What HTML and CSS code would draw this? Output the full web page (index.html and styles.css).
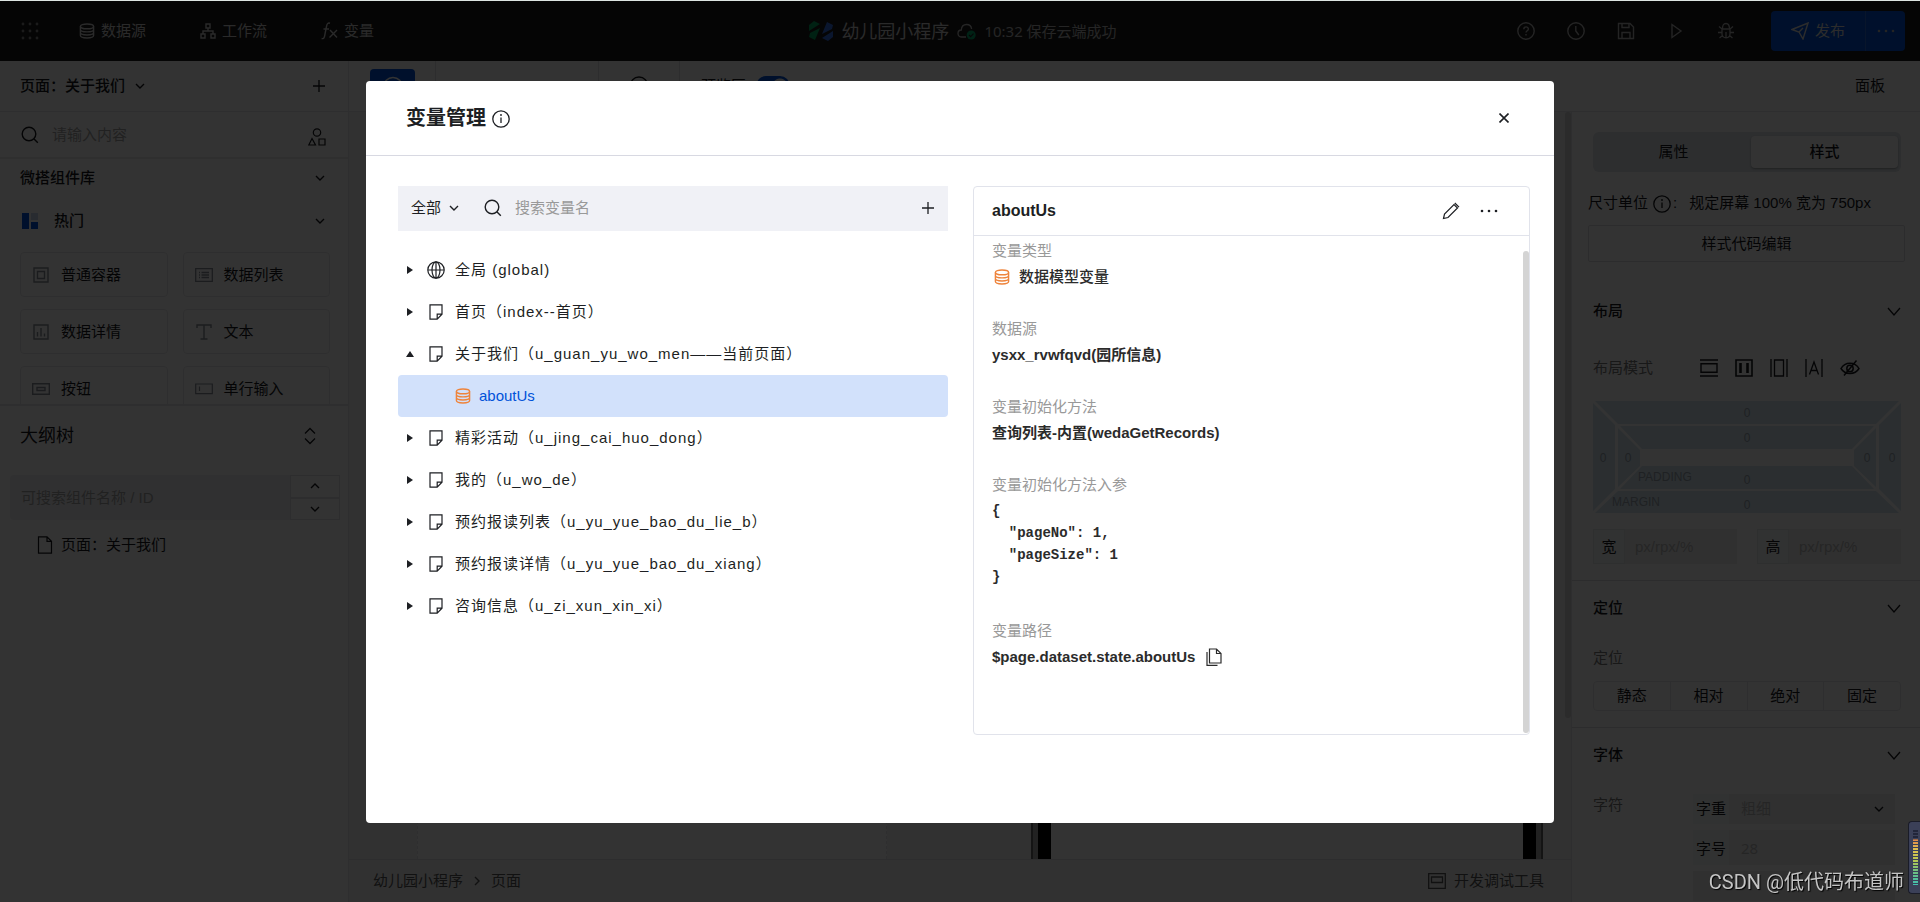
FILE: index.html
```html
<!DOCTYPE html>
<html lang="zh-CN">
<head>
<meta charset="utf-8">
<title>变量管理</title>
<link rel="stylesheet" href="styles.css">
</head>
<body>
<svg class="defs" aria-hidden="true">
  <symbol id="i-down" viewBox="0 0 10 6"><path d="M1 1l4 4 4-4" fill="none" stroke="currentColor" stroke-width="1.4"/></symbol>
  <symbol id="i-up" viewBox="0 0 10 6"><path d="M1 5l4-4 4 4" fill="none" stroke="currentColor" stroke-width="1.4"/></symbol>
  <symbol id="i-plus" viewBox="0 0 12 12"><path d="M6 0v12M0 6h12" fill="none" stroke="currentColor" stroke-width="1.3"/></symbol>
  <symbol id="i-search" viewBox="0 0 18 18"><g fill="none" stroke="currentColor" stroke-width="1.4"><circle cx="8" cy="8" r="6.8"/><path d="M12.8 12.8l4 4"/></g></symbol>
  <symbol id="i-db" viewBox="0 0 16 16"><g fill="none" stroke="currentColor" stroke-width="1.4"><ellipse cx="8" cy="3.4" rx="6.6" ry="2.4"/><path d="M1.4 3.4v9.2c0 1.3 3 2.4 6.6 2.4s6.6-1.1 6.6-2.4V3.4M1.4 6.5c0 1.3 3 2.4 6.6 2.4s6.6-1.1 6.6-2.4M1.4 9.6c0 1.3 3 2.4 6.6 2.4s6.6-1.1 6.6-2.4"/></g></symbol>
  <symbol id="i-info" viewBox="0 0 18 18"><circle cx="9" cy="9" r="8.2" fill="none" stroke="currentColor" stroke-width="1.3"/><path d="M9 7.4v5.6" fill="none" stroke="currentColor" stroke-width="1.3"/><circle cx="9" cy="5" r="0.9" fill="currentColor"/></symbol>
  <symbol id="i-page" viewBox="0 0 14 16"><path d="M1 .8h12v9.4L8.200 15.200H1zM13 10.200H8.200v5" fill="none" stroke="currentColor" stroke-width="1.200"/></symbol>
  <symbol id="i-file" viewBox="0 0 16 18"><path d="M1.500.8h8.500l4.500 4.500v11.900h-13zM10 .8v4.500h4.500" fill="none" stroke="currentColor" stroke-width="1.200"/></symbol>
  <symbol id="i-right" viewBox="0 0 8 10"><path d="M1 1l6 4-6 4z" fill="currentColor"/></symbol>
  <symbol id="i-dots" viewBox="0 0 18 4"><g fill="currentColor"><circle cx="2" cy="2" r="1.300"/><circle cx="9" cy="2" r="1.300"/><circle cx="16" cy="2" r="1.300"/></g></symbol>
  <symbol id="i-wide" viewBox="0 0 14 9"><path d="M1 1l6 7 6-7" fill="none" stroke="currentColor" stroke-width="1.300"/></symbol>
  <symbol id="i-box" viewBox="0 0 16 16"><path d="M1 1h14v14H1zM4.500 4.500h7v7h-7z" fill="none" stroke="currentColor" stroke-width="1.400"/></symbol>
</svg>

<div class="app">
  <header class="topbar">
    <nav class="topnav">
      <button class="bare" aria-label="应用"><svg width="18" height="18" viewBox="0 0 18 18" fill="currentColor" class="dim"><circle cx="2" cy="2" r="1.400"/><circle cx="9" cy="2" r="1.400"/><circle cx="16" cy="2" r="1.400"/><circle cx="2" cy="9" r="1.400"/><circle cx="9" cy="9" r="1.400"/><circle cx="16" cy="9" r="1.400"/><circle cx="2" cy="16" r="1.400"/><circle cx="9" cy="16" r="1.400"/><circle cx="16" cy="16" r="1.400"/></svg></button>
      <div class="navlinks">
        <a href="#data"><svg width="16" height="16"><use href="#i-db"/></svg>数据源</a>
        <a href="#flow"><svg width="16" height="16" viewBox="0 0 16 16" fill="none" stroke="currentColor" stroke-width="1.400"><path d="M6 1h4v4H6zM1 11h4v4H1zM11 11h4v4h-4zM8 5v3M3 11V8h10v3"/></svg>工作流</a>
        <a href="#vars"><svg width="17" height="18" viewBox="0 0 17 18" fill="none" stroke="currentColor" stroke-width="1.400"><path d="M9 1.200C6.800.6 6 2 5.600 4L3.600 14c-.4 2-1.200 3-3 2.500M2.500 7h5.500M9 8l7 7.500M16 8l-7.500 7.500"/></svg>变量</a>
      </div>
    </nav>
    <div class="apptitle">
      <svg width="24" height="20" viewBox="0 0 24 20"><path d="M0 4l5-4 6 3-11 7zM1 12l4-2 6-3-5 12-6-3z" fill="#00a35e"/><path d="M24 16l-5 4-6-3 11-7zM23 8l-4 2-6 3 5-12 6 3z" fill="#3570e6"/></svg>
      <span class="appname">幼儿园小程序</span>
      <svg class="cloud" width="19" height="17" viewBox="0 0 19 17"><path d="M9 14H5C2.500 14 1 12.400 1 10.400 1 8.400 2.400 7 4.300 7 4.500 3.600 6.700 1.500 9.600 1.500c2.700 0 4.700 1.800 5 4.500" fill="none" stroke="#bbb" stroke-width="1.300"/><circle cx="14.200" cy="12" r="4.500" fill="#00a86b"/><path d="M12 12l1.700 1.700 2.800-3" fill="none" stroke="#222" stroke-width="1.200"/></svg>
      <span class="saved">10:32 保存云端成功</span>
    </div>
    <div class="topactions">
      <button class="bare" aria-label="帮助"><svg width="18" height="18" viewBox="0 0 18 18" fill="none" stroke="currentColor" stroke-width="1.400"><circle cx="9" cy="9" r="8.200"/><path d="M6.800 7.200c0-3 4.600-3 4.600-.2 0 1.800-2.400 1.800-2.400 3.600M9 12v1.500"/></svg></button>
      <button class="bare" aria-label="历史"><svg width="18" height="18" viewBox="0 0 18 18" fill="none" stroke="currentColor" stroke-width="1.400"><circle cx="9" cy="9" r="8.200"/><path d="M8.800 4v5l3 4"/></svg></button>
      <button class="bare" aria-label="保存"><svg width="18" height="18" viewBox="0 0 18 18" fill="none" stroke="currentColor" stroke-width="1.400"><path d="M1.500 1.500h11.500l3.500 3.500v11.500h-15zM5 1.500v4h7v-4M5 16.500v-6h8v6"/></svg></button>
      <button class="bare" aria-label="预览"><svg width="18" height="18" viewBox="0 0 18 18" fill="none" stroke="currentColor" stroke-width="1.400"><path d="M5 2.500l9 6.500-9 6.500z"/></svg></button>
      <button class="bare" aria-label="调试"><svg width="18" height="18" viewBox="0 0 18 18" fill="none" stroke="currentColor" stroke-width="1.300"><path d="M5 7h8v5c0 5-8 5-8 0zM5.500 7C5.500 3 6.500 1.500 9 1.500S12.500 3 12.500 7M9 10v6M5 7L2 4.500M13 7l3-2.500M5 10.500H1M13 10.500h4M5.500 13.500L2.500 16M12.500 13.500l3 2.500"/></svg></button>
      <div class="publish">
        <button class="pub-main"><svg width="18" height="18" viewBox="0 0 18 18" fill="none" stroke="currentColor" stroke-width="1.400"><path d="M1 7.500L17 1l-5 16-4-7zM8 10l4-4"/></svg>发布</button>
        <button class="pub-more" aria-label="更多"><svg width="18" height="4"><use href="#i-dots"/></svg></button>
      </div>
    </div>
  </header>

  <div class="work">
    <aside class="left">
      <div class="pagebar">
        <button class="bare strong">页面：关于我们<svg width="10" height="6"><use href="#i-down"/></svg></button>
        <button class="bare" aria-label="新建页面"><svg width="12" height="12"><use href="#i-plus"/></svg></button>
      </div>
      <div class="compsearch">
        <svg width="18" height="18"><use href="#i-search"/></svg>
        <input type="text" placeholder="请输入内容" aria-label="搜索组件">
        <svg class="shapes" width="18" height="18" viewBox="0 0 18 18" fill="none" stroke="currentColor" stroke-width="1.200"><circle cx="9" cy="4.500" r="3.700"/><path d="M4 10.500l3.500 6.500H.8zM11 11h6v6h-6z"/></svg>
      </div>
      <section class="library">
        <h2 class="libhead">微搭组件库<svg width="10" height="6"><use href="#i-down"/></svg></h2>
        <h3 class="libhead hot"><span><svg width="16" height="16" viewBox="0 0 16 16"><path d="M0 0h7v16H0z" fill="#0052d9"/><path d="M9 0h7v7H9z" fill="#c9d4ee"/><path d="M9 9h7v7H9z" fill="#0052d9"/></svg>热门</span><svg width="10" height="6"><use href="#i-down"/></svg></h3>
        <ul class="comps">
          <li><svg width="16" height="16"><use href="#i-box"/></svg>普通容器</li>
          <li><svg width="18" height="14" viewBox="0 0 18 14" fill="none" stroke="currentColor" stroke-width="1.300"><path d="M.7.7h16.600v12.600H.7zM4 4.500h1M6.500 4.500H14M4 7h1M6.500 7H14M4 9.500h1M6.500 9.500H14"/></svg>数据列表</li>
          <li><svg width="16" height="16" viewBox="0 0 16 16" fill="none" stroke="currentColor" stroke-width="1.400"><path d="M1 1h14v14H1zM4.500 12.500V8M8 12.500V4M11.500 12.500v-3"/></svg>数据详情</li>
          <li><svg width="18" height="16" viewBox="0 0 18 16" fill="none" stroke="currentColor" stroke-width="1.400"><path d="M2 4V1h14v3M9 1v14M5.500 15h7"/></svg>文本</li>
          <li><svg width="18" height="12" viewBox="0 0 18 12" fill="none" stroke="currentColor" stroke-width="1.400"><path d="M.7.7h16.600v10.600H.7zM5 4.500h8v3H5z"/></svg>按钮</li>
          <li><svg width="18" height="12" viewBox="0 0 18 12" fill="none" stroke="currentColor" stroke-width="1.200"><path d="M.7 1h16.600v9.600H.7zM4.500 3.500V8"/></svg>单行输入</li>
        </ul>
      </section>
      <section class="outline">
        <h2>大纲树<svg width="12" height="18" viewBox="0 0 12 18" fill="none" stroke="currentColor" stroke-width="1.300"><path d="M1 6.500l5-5 5 5M1 11.500l5 5 5-5"/></svg></h2>
        <div class="treesearch">
          <input type="text" placeholder="可搜索组件名称 / ID" aria-label="搜索大纲树">
          <div class="steps">
            <button aria-label="上一个"><svg width="10" height="6"><use href="#i-up"/></svg></button>
            <button aria-label="下一个"><svg width="10" height="6"><use href="#i-down"/></svg></button>
          </div>
        </div>
        <div class="treepage"><svg width="16" height="18"><use href="#i-file"/></svg>页面：关于我们</div>
      </section>
    </aside>

    <main class="main">
      <div class="toolbar">
        <button class="tool-on" aria-label="编辑模式"><svg width="22" height="22" viewBox="0 0 22 22" fill="none" stroke="#fff" stroke-width="1.500"><circle cx="11" cy="11" r="9.500"/><path d="M16 6l-7 3-2 6 6-2z"/></svg></button>
        <span class="cell device">iPhone 6-100%</span>
        <span class="cell round"><svg width="20" height="20" viewBox="0 0 20 20" fill="none" stroke="currentColor" stroke-width="1.400"><circle cx="10" cy="10" r="9"/></svg></span>
        <label class="cell preview">预览区<input type="checkbox" class="switch" checked></label>
        <button class="bare panelbtn">面板</button>
      </div>
      <div class="stage">
        <div class="middle">
          <div class="canvas">
            <div class="artboard"></div>
            <div class="phone"><div class="screen"></div></div>
            <div class="canvasbar"></div>
          </div>
          <footer class="status">
            <nav class="crumbs"><a href="#app">幼儿园小程序</a><svg width="6" height="10" viewBox="0 0 6 10"><path d="M1 1l4 4-4 4" fill="none" stroke="currentColor" stroke-width="1.400"/></svg><a href="#page">页面</a></nav>
            <button class="bare dev"><svg width="18" height="16" viewBox="0 0 18 16" fill="none" stroke="currentColor" stroke-width="1.300"><path d="M.7.7h16.600v14.600H.7zM3.500 4h11v5.500h-11z"/></svg>开发调试工具</button>
          </footer>
        </div>
        <aside class="right">
          <div class="tabs"><button>属性</button><button class="on">样式</button></div>
          <div class="unit"><span>尺寸单位</span><svg width="18" height="18"><use href="#i-info"/></svg><span>:</span><span class="rule">规定屏幕 100% 宽为 750px</span></div>
          <button class="codebtn">样式代码编辑</button>
          <section class="sect first">
            <h2>布局<svg width="14" height="9"><use href="#i-wide"/></svg></h2>
            <div class="modes">
              <span class="lbl">布局模式</span>
              <div class="modeicons">
                <svg width="18" height="18" viewBox="0 0 18 18" fill="none" stroke="currentColor" stroke-width="1.400"><path d="M0 1h18M0 17h18M1 4.700h16v8.600H1z"/></svg>
                <svg width="18" height="18" viewBox="0 0 18 18" fill="none" stroke="currentColor" stroke-width="1.600"><path d="M1 1h16v16H1z"/><path d="M5.500 4v10M12.500 4v10" stroke-width="2.600"/></svg>
                <svg width="18" height="18" viewBox="0 0 18 18" fill="none" stroke="currentColor" stroke-width="1.300"><path d="M1 0v18M17 0v18M4.500 1h9v16h-9z"/></svg>
                <svg width="18" height="18" viewBox="0 0 18 18" fill="none" stroke="currentColor" stroke-width="1.300"><path d="M1 0v18M17 0v18M4.500 15.500L9 3l4.500 12.500M6 11.500h6"/></svg>
                <svg width="20" height="18" viewBox="0 0 20 18" fill="none" stroke="currentColor" stroke-width="1.500"><path d="M1 9.500C5 2.500 15 2.500 19 9.500 15 16 5 16 1 9.500zM16.500 1.500L4 16.500"/><circle cx="10" cy="9.500" r="3.200"/></svg>
              </div>
            </div>
            <svg class="boxmodel" viewBox="0 0 308 112">
              <g fill="#d4e6f0"><path d="M2 0h304l-23 23H25zM0 2l22 22v64L0 110zM308 2l-22 22v64l22 22zM2 112h304l-23-22H25z"/><path d="M27 25h254l-22 23H49zM25 27l22 22v16L25 86zM283 27l-22 22v16l22 21zM27 88h254l-22-23H49z"/></g>
              <g class="bmtext" text-anchor="middle"><text x="154" y="16">0</text><text x="154" y="41">0</text><text x="154" y="83">0</text><text x="154" y="108">0</text><text x="10" y="61">0</text><text x="35" y="61">0</text><text x="274" y="61">0</text><text x="299" y="61">0</text></g>
              <g class="bmname"><text x="45" y="80">PADDING</text><text x="19" y="105">MARGIN</text></g>
            </svg>
            <div class="sizes">
              <label><span>宽</span><input type="text" placeholder="px/rpx/%"></label>
              <label><span>高</span><input type="text" placeholder="px/rpx/%"></label>
            </div>
          </section>
          <section class="sect">
            <h2>定位<svg width="14" height="9"><use href="#i-wide"/></svg></h2>
            <div class="lbl">定位</div>
            <div class="segs"><button>静态</button><button>相对</button><button>绝对</button><button>固定</button></div>
          </section>
          <section class="sect">
            <h2>字体<svg width="14" height="9"><use href="#i-wide"/></svg></h2>
            <div class="fontrow">
              <span class="lbl">字符</span>
              <div class="fontfields">
                <label class="ff"><span>字重</span><select><option>粗细</option></select><svg width="10" height="6"><use href="#i-down"/></svg></label>
                <label class="ff tall"><span>字号</span><input type="text" placeholder="28"></label>
                <div class="ff"></div>
              </div>
            </div>
          </section>
        </aside>
      </div>
    </main>
  </div>
</div>

<div class="overlay">
  <div class="modal" role="dialog" aria-labelledby="dlg-title">
    <div class="mhead">
      <h1 id="dlg-title">变量管理<svg width="18" height="18"><use href="#i-info"/></svg></h1>
      <button class="bare" aria-label="关闭"><svg width="10" height="10" viewBox="0 0 10 10"><path d="M.5.5l9 9M9.500.5l-9 9" fill="none" stroke="currentColor" stroke-width="1.600"/></svg></button>
    </div>
    <div class="mbody">
      <div class="vars">
        <div class="varbar">
          <span class="scope"><select aria-label="范围"><option>全部</option></select><svg width="10" height="6"><use href="#i-down"/></svg></span>
          <svg width="18" height="18"><use href="#i-search"/></svg>
          <input type="text" placeholder="搜索变量名" aria-label="搜索变量名">
          <button class="bare" aria-label="新建变量"><svg width="12" height="12"><use href="#i-plus"/></svg></button>
        </div>
        <ul class="tree">
          <li><svg class="arrow" width="8" height="10"><use href="#i-right"/></svg><svg class="ico" width="18" height="18" viewBox="0 0 18 18" fill="none" stroke="currentColor" stroke-width="1.200"><circle cx="9" cy="9" r="8.200"/><ellipse cx="9" cy="9" rx="4" ry="8.200"/><path d="M1 9h16M9 1v16"/></svg>全局 (global)</li>
          <li><svg class="arrow" width="8" height="10"><use href="#i-right"/></svg><svg class="ico" width="14" height="16"><use href="#i-page"/></svg>首页（index--首页）</li>
          <li><svg class="arrow" width="8" height="10" viewBox="0 0 8 10"><path d="M0 8l4-6 4 6z" fill="currentColor"/></svg><svg class="ico" width="14" height="16"><use href="#i-page"/></svg>关于我们（u_guan_yu_wo_men——当前页面）</li>
          <li class="sel"><svg width="16" height="16"><use href="#i-db"/></svg>aboutUs</li>
          <li><svg class="arrow" width="8" height="10"><use href="#i-right"/></svg><svg class="ico" width="14" height="16"><use href="#i-page"/></svg>精彩活动（u_jing_cai_huo_dong）</li>
          <li><svg class="arrow" width="8" height="10"><use href="#i-right"/></svg><svg class="ico" width="14" height="16"><use href="#i-page"/></svg>我的（u_wo_de）</li>
          <li><svg class="arrow" width="8" height="10"><use href="#i-right"/></svg><svg class="ico" width="14" height="16"><use href="#i-page"/></svg>预约报读列表（u_yu_yue_bao_du_lie_b）</li>
          <li><svg class="arrow" width="8" height="10"><use href="#i-right"/></svg><svg class="ico" width="14" height="16"><use href="#i-page"/></svg>预约报读详情（u_yu_yue_bao_du_xiang）</li>
          <li><svg class="arrow" width="8" height="10"><use href="#i-right"/></svg><svg class="ico" width="14" height="16"><use href="#i-page"/></svg>咨询信息（u_zi_xun_xin_xi）</li>
        </ul>
      </div>
      <section class="detail">
        <div class="dhead">
          <h2>aboutUs</h2>
          <div class="dacts">
            <button class="bare" aria-label="编辑"><svg width="18" height="18" viewBox="0 0 18 18" fill="none" stroke="currentColor" stroke-width="1.200"><path d="M1.500 16.500l1-4.500L12 2.500l3.500 3.500L6 15.500zM12.800 1l4.200 4.200"/></svg></button>
            <button class="bare" aria-label="更多"><svg width="18" height="4"><use href="#i-dots"/></svg></button>
          </div>
        </div>
        <dl class="fields">
          <div><dt>变量类型</dt><dd class="type"><svg width="16" height="16"><use href="#i-db"/></svg>数据模型变量</dd></div>
          <div><dt>数据源</dt><dd>ysxx_rvwfqvd(园所信息)</dd></div>
          <div><dt>变量初始化方法</dt><dd>查询列表-内置(wedaGetRecords)</dd></div>
          <div class="args"><dt>变量初始化方法入参</dt><dd><pre>{
  "pageNo": 1,
  "pageSize": 1
}</pre></dd></div>
          <div><dt>变量路径</dt><dd class="path">$page.dataset.state.aboutUs<button class="bare" aria-label="复制"><svg width="16" height="18" viewBox="0 0 16 18" fill="none" stroke="currentColor" stroke-width="1.200"><path d="M3.500 1h7l4.500 4.500v9.500h-11.500zM10.500 1v4.500H15M1 4v13.300h10.500"/></svg></button></dd></div>
        </dl>
        <div class="dbar"></div>
      </section>
    </div>
  </div>
</div>

<div class="watermark">CSDN @低代码布道师</div>
<div class="meter"><div class="bars"></div></div>
</body>
</html>
```

FILE: styles.css
```css
* { box-sizing: border-box; }

body {
  margin: 0;
  font: 15px/22px "Liberation Sans", "Noto Sans CJK SC", sans-serif;
  color: #16181c;
  background: #fff;
  overflow: hidden;
}

button, input, select { font: inherit; color: inherit; }
input, select { border: 0; background: none; outline: 0; padding: 0; min-width: 0; appearance: none; }
button { cursor: pointer; padding: 0; }
a { color: inherit; text-decoration: none; }
ul, dl, dd, h1, h2, h3, pre { margin: 0; padding: 0; list-style: none; }
svg { flex: none; display: block; }
.defs { position: absolute; width: 0; height: 0; }
.bare { display: flex; align-items: center; border: 0; background: none; }

/* App shell */
.app { display: flex; flex-direction: column; height: 100vh; border-top: 1px solid #dde5e2; }
.topbar {
  display: grid;
  grid-template-columns: 1fr auto 1fr;
  align-items: center;
  height: 60px;
  flex: none;
  padding: 0 15px 0 21px;
  background: #1a1a1a;
  color: #d0d0d0;
}
.topnav { display: flex; align-items: center; gap: 40px; }
.dim { opacity: .6; }
.navlinks { display: flex; gap: 54px; }
.navlinks a { display: flex; align-items: center; gap: 6px; }
.apptitle { display: flex; align-items: center; gap: 8px; font-family: "Noto Sans", "Noto Sans CJK SC", sans-serif; }
.appname { font-size: 18px; }
.saved { color: #bbb; }
.topactions { display: flex; align-items: center; justify-content: flex-end; gap: 32px; color: #b4b4b4; }
.publish { display: flex; height: 40px; margin-left: 4px; border-radius: 4px; background: #0052d9; overflow: hidden; }
.publish button { display: flex; align-items: center; justify-content: center; border: 0; background: none; }
.pub-main { gap: 6px; width: 94px; color: #ddd; }
.publish .pub-more { width: 40px; border-left: 1px solid #2a68d8; }

.work { display: flex; flex: 1; min-height: 0; }
.left { display: flex; flex-direction: column; width: 349px; border-right: 1px solid #e4e4e8; background: #fff; }
.pagebar, .compsearch { display: flex; align-items: center; justify-content: space-between; }
.pagebar { height: 51px; padding: 0 23px 0 20px; border-bottom: 1px solid #e4e4e8; }
.strong { gap: 10px; font-weight: 500; }
.compsearch { height: 47px; padding: 0 22px 0 21px; gap: 13px; border-bottom: 2px solid #e8e8ec; }
.compsearch input { flex: 1; }
.shapes { margin-top: 4px; }
input::placeholder { color: #a6a6a6; opacity: 1; }
.library { height: 245px; overflow: hidden; }
.libhead { display: flex; align-items: center; justify-content: space-between; height: 38px; padding: 0 23px 0 20px; font-size: 15px; font-weight: 500; }
.hot { height: 48px; padding-left: 22px; }
.hot span { display: flex; align-items: center; gap: 16px; }
.comps { display: grid; grid-template-columns: 1fr 1fr; gap: 12px 15px; padding: 7px 18px 0 20px; }
.comps li { display: flex; align-items: center; gap: 11px; height: 45px; padding-left: 11px; border: 1px solid #e6e6ea; border-radius: 4px; }
.comps svg { width: 18px; color: #888d98; }
.outline { border-top: 2px solid #e6e6ea; }
.outline h2 { display: flex; align-items: center; justify-content: space-between; height: 60px; padding: 0 32px 0 20px; font-size: 18px; font-weight: 400; }
.treesearch { display: flex; height: 45px; margin: 9px 8px 0 10px; }
.treesearch input { flex: 1; padding-left: 11px; background: #f0f1f4; border-radius: 4px 0 0 4px; }
.steps { display: flex; flex-direction: column; width: 50px; }
.steps button { display: flex; flex: 1; align-items: center; justify-content: center; border: 1px solid #e0e0e4; background: #fff; }
.treepage { display: flex; align-items: center; gap: 8px; height: 50px; padding-left: 37px; }

.main { display: flex; flex-direction: column; flex: 1; min-width: 0; }
.toolbar { display: flex; height: 51px; flex: none; border-bottom: 1px solid #e4e4e8; background: #fff; }
.tool-on { display: flex; align-items: center; justify-content: center; width: 45px; height: 36px; margin: 8px 20px 0 21px; border: 0; border-radius: 4px; background: #0052d9; }
.cell { display: flex; align-items: center; border-left: 1px solid #e0e0e4; }
.device { width: 163px; padding-left: 20px; font-family: "Noto Sans", sans-serif; }
.round { width: 81px; padding-left: 30px; }
.preview { padding-left: 21px; gap: 10px; }
.switch { width: 34px; height: 20px; margin: 0; border-radius: 10px; background: radial-gradient(circle at 24px 10px, #fff 7px, #0052d9 8px); }
.panelbtn { margin-left: auto; padding-right: 35px; }
.stage { display: flex; flex: 1; min-height: 0; }
.middle { display: flex; flex-direction: column; flex: 1; min-width: 0; }
.canvas { position: relative; display: flex; flex: 1; padding-left: 68px; background: #f2f2f5; overflow: hidden; }
.artboard { width: 470px; border: 1px dashed #e6e6ea; border-top: 0; border-bottom: 0; background: #fff; }
.phone { width: 512px; margin-left: 144px; padding: 0 5px; border: 2px solid #666; border-top: 0; border-bottom: 0; background: #aaa; }
.screen { height: 100%; border: 13px solid #000; border-top: 0; border-bottom: 0; background: #fff; }
.canvasbar { position: absolute; top: 0; right: 0; width: 6px; height: 606px; border-radius: 3px; background: #d4d4d4; }
.status { display: flex; align-items: center; justify-content: space-between; height: 43px; flex: none; padding: 0 27px 0 24px; border-top: 1px solid #e0e0e4; background: #f5f5f5; color: #555; }
.crumbs { display: flex; align-items: center; gap: 11px; }
.dev { gap: 8px; }

/* Style inspector */
.right { width: 349px; padding: 20px 19px 0 21px; border-left: 1px solid #e4e4e8; background: #fff; overflow: hidden; }
.tabs { display: flex; height: 40px; padding: 4px 3px; border-radius: 6px; background: #dfe5ea; }
.tabs button { flex: 1; border: 0; background: none; }
.tabs .on { flex: 0 0 147px; border-radius: 4px; background: #fff; box-shadow: 0 1px 2px rgba(0, 0, 0, .3); font-weight: 500; }
.unit { display: flex; align-items: center; height: 38px; margin: 12px 0 3px -5px; white-space: nowrap; }
.unit svg { margin: 2px 2px 0 5px; }
.rule { margin-left: 12px; }
.codebtn { display: block; width: calc(100% + 9px); height: 37px; margin: 0 -4px 0 -5px; border: 1px solid #dcdce0; border-radius: 2px; background: none; }
.sect { margin: 16px -19px 0 -21px; padding: 0 19px 0 21px; border-top: 1px solid #dcdce0; }
.first { margin-top: 22px; border: 0; }
.sect h2 { display: flex; align-items: center; justify-content: space-between; height: 54px; margin-bottom: 12px; font-size: 15px; font-weight: 500; }
.lbl { color: #777; }
.modes { display: flex; align-items: center; justify-content: space-between; height: 36px; margin-bottom: 15px; padding-right: 41px; }
.modeicons { display: flex; gap: 17px; }
.boxmodel { width: 100%; height: auto; }
.bmtext, .bmname { font-size: 12px; fill: #9aa4ae; }
.sizes { display: flex; gap: 20px; margin-top: 16px; }
.sizes label { display: flex; flex: 1; min-width: 0; height: 35px; background: #f0f0f0; }
.sizes span { display: flex; align-items: center; justify-content: center; flex: none; width: 32px; background: #f6faf8; border: 1px solid #e6ecea; }
.sizes input { flex: 1; padding-left: 10px; }
.sizes input::placeholder, .ff input::placeholder, .ff select { color: #bbb; }
.segs { display: flex; height: 30px; margin-top: 12px; border: 1px solid #e6e6ea; border-radius: 4px; }
.segs button { flex: 1; border: 0; background: none; }
.segs button + button { border-left: 1px solid #e6e6ea; }
.fontrow { display: flex; justify-content: space-between; padding-right: 6px; }
.fontfields { display: flex; flex-direction: column; gap: 6px; width: 202px; }
.ff { display: flex; align-items: center; height: 30px; padding-right: 11px; background: #f0f0f0; }
.tall { height: 35px; font-family: "Noto Sans", "Noto Sans CJK SC", sans-serif; }
.ff span { display: flex; align-items: center; justify-content: center; flex: none; width: 36px; height: 100%; margin-right: 12px; background: #f6faf8; }
.ff select, .ff input { flex: 1; }

/* Variable dialog */
.overlay { position: fixed; inset: 1px 0 0; display: flex; align-items: center; justify-content: center; background: rgba(0, 0, 0, .8); }
.modal { width: min(1188px, 94vw); border-radius: 4px; background: #fff; color: #1d1f23; }
.mhead { display: flex; align-items: center; justify-content: space-between; height: 75px; padding: 0 45px 0 40px; border-bottom: 1px solid #d8d9e2; }
.mhead h1 { display: flex; align-items: center; gap: 6px; font-size: 20px; line-height: 30px; font-weight: 700; }
.mhead h1 svg { margin-top: 3px; }
.mbody { display: flex; gap: 25px; padding: 30px 24px 88px 32px; }
.vars { flex: 0 1 550px; }
.varbar { display: flex; align-items: center; height: 45px; padding: 0 14px 0 13px; background: #f0f1f6; }
.varbar input { flex: 1; margin-left: 13px; }
.varbar input::placeholder { color: #999; }
.scope { display: flex; align-items: center; gap: 7px; margin-right: 25px; }
.tree { padding-top: 18px; }
.tree li { display: flex; align-items: center; height: 42px; letter-spacing: 1px; white-space: nowrap; }
.arrow { margin: 0 13px 0 8px; }
.ico { width: 18px; margin-right: 10px; }
.tree .sel { gap: 8px; padding-left: 57px; border-radius: 4px; background: #d2e1fb; color: #0052d9; letter-spacing: normal; }
.sel svg, .type svg { color: #ee843c; }
.detail { position: relative; display: flex; flex-direction: column; flex: 1; min-height: 549px; border: 1px solid #e1e3eb; border-radius: 4px; }
.dhead { display: flex; align-items: center; justify-content: space-between; height: 49px; padding: 0 31px 0 18px; border-bottom: 1px solid #e1e3eb; }
.dhead h2 { font-size: 16px; font-weight: 700; }
.dacts { display: flex; gap: 20px; }
.fields { padding: 2px 18px; color: #2b2b2b; }
.fields > div { margin-bottom: 26px; }
.fields .args { margin-bottom: 30px; }
dt, dd { line-height: 26px; }
dt { color: #999; }
dd { font-weight: 600; }
.type { display: flex; align-items: center; gap: 9px; padding-left: 2px; font-weight: 500; }
.path { display: flex; align-items: center; gap: 11px; }
pre { padding-top: 2px; font: 700 14px/22px "Liberation Mono", monospace; }
.dbar { position: absolute; top: 64px; right: 0; bottom: 1px; width: 6px; border-radius: 3px; background: #d4d4d4; }

.watermark {
  position: fixed;
  right: 16px;
  bottom: 7px;
  font: 20px/26px Roboto, "Noto Sans CJK SC", sans-serif;
  color: #c4c4c4;
  text-shadow: 1px 1px 1px #000;
}
.meter { position: fixed; right: 0; bottom: 8px; width: 12px; height: 73px; padding: 8px 2px 8px 4px; border: 1px solid #1a1c28; border-right: 0; border-radius: 4px 0 0 4px; background: #3b4058; }
.bars {
  height: 100%;
  background:
    repeating-linear-gradient(transparent 0 2px, #3b4058 2px 3px),
    linear-gradient(#22263a 0 16%, #e08a4a 18%, #e0c050 35%, #b8c850 55%, #70c080 75%, #40c0b0 100%);
}
```
